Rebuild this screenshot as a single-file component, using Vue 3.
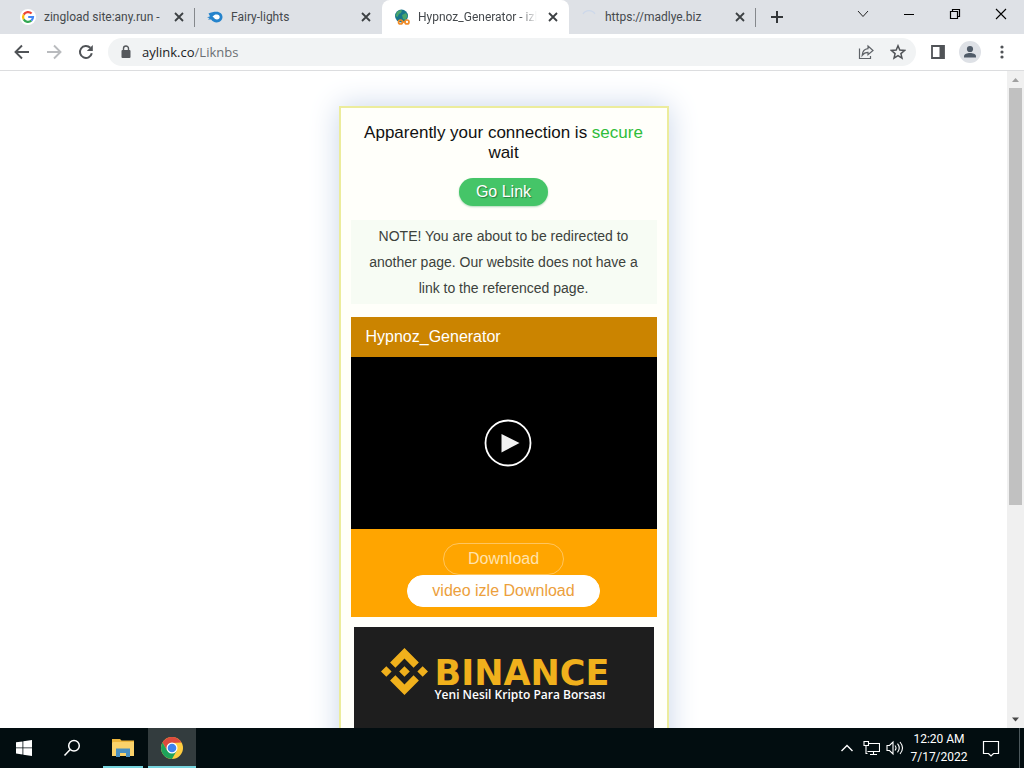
<template>
  <div class="desktop">
    <header class="tab-strip">
      <nav class="tabs" aria-label="Tabs">
        <div v-for="tab in tabs" :key="tab.title" class="tab" :class="{ active: tab.id === activeTab, divided: tab.divided }" @click="activeTab = tab.id">
          <svg v-if="tab.icon === 'google'" class="favicon" viewBox="0 0 16 16">
            <circle cx="8" cy="8" r="8" fill="#fff" />
            <g fill="none" stroke-width="2.2">
              <path d="M11.6 4.6A5 5 0 0 0 3.7 5.6" stroke="#ea4335" />
              <path d="M3.7 5.6a5 5 0 0 0 0 4.8" stroke="#fbbc05" />
              <path d="M3.7 10.4a5 5 0 0 0 7.6 1.3" stroke="#34a853" />
              <path d="M11.3 11.7A5 5 0 0 0 13 8H8.2" stroke="#4285f4" />
            </g>
          </svg>
          <svg v-else-if="tab.icon === 'flame'" class="favicon" viewBox="0 0 16 16">
            <path d="M1.5 4.4C4 3.2 6.500 2.700 9.500 2.700c3.600 0 6 2.300 6 5.300s-2.400 5.400-5.800 5.400c-2.500 0-4.500-1.200-5.500-2.900L1 10.600 2.600 9 0 8.600l3-1.300z" fill="#2583cc" />
            <path d="M5.500 7.800C7 5.800 8.500 5.300 10 5.500c1.600.2 2.700 1.200 2.700 2.500s-1 2.500-2.700 2.500c-1.500 0-2.500-.8-2.900-1.700z" fill="#fff" />
          </svg>
          <svg v-else-if="tab.icon === 'globe'" class="favicon" viewBox="0 0 16 16">
            <circle cx="7.500" cy="7" r="6.500" fill="#17768c" />
            <path d="M3 3c2-2 4-2 5-1.500L7 4 5 5 3.500 8 1.500 7zM8 6l4-2 1.500 3-2 4L9 10z" fill="#49a56c" />
            <g fill="none" stroke="#f28c28" stroke-width="1.700">
              <circle cx="6.500" cy="13" r="2" />
              <circle cx="13" cy="13" r="2" />
              <path d="M8.500 13h2.500" />
            </g>
          </svg>
          <svg v-else class="favicon" viewBox="0 0 16 16">
            <path d="M2 5a7 7 0 0 1 12 0" fill="none" stroke="#cdd8ea" stroke-width="1.300" />
          </svg>
          <span class="tab-title">{{ tab.title }}</span>
          <button class="tab-close" :aria-label="'Close ' + tab.title">
            <svg width="10" height="10" viewBox="0 0 10 10"><path d="M1 1l8 8M9 1L1 9" stroke="#3c4043" stroke-width="1.800" /></svg>
          </button>
        </div>
      </nav>
      <button class="new-tab" aria-label="New tab">
        <svg width="12" height="12" viewBox="0 0 12 12"><path d="M6 0v12M0 6h12" stroke="#333639" stroke-width="2" /></svg>
      </button>
      <div class="window-controls">
        <button aria-label="Search tabs"><svg width="12" height="12" viewBox="0 0 12 12"><path d="M1 3l5 5.500L11 3" fill="none" stroke="#222" /></svg></button>
        <button aria-label="Minimize"><svg width="12" height="12" viewBox="0 0 12 12"><path d="M1 6.500h10" stroke="#000" /></svg></button>
        <button aria-label="Restore"><svg width="12" height="12" viewBox="0 0 12 12"><path d="M1.500 3.500h7v7h-7zM3.500 3.500v-2h7v7h-2" fill="none" stroke="#000" stroke-width="1.200" /></svg></button>
        <button aria-label="Close"><svg width="12" height="12" viewBox="0 0 12 12"><path d="M1 1l10 10M11 1L1 11" stroke="#000" stroke-width="1.100" /></svg></button>
      </div>
    </header>

    <div class="toolbar">
      <button class="tool" aria-label="Back">
        <svg width="16" height="16" viewBox="0 0 16 16"><path d="M15 8H2M8 1.500L1.500 8 8 14.500" fill="none" stroke="#505357" stroke-width="1.900" /></svg>
      </button>
      <button class="tool" aria-label="Forward" disabled>
        <svg width="16" height="16" viewBox="0 0 16 16"><path d="M1 8h13M8 1.500L14.500 8 8 14.500" fill="none" stroke="#b9bbbe" stroke-width="1.900" /></svg>
      </button>
      <button class="tool" aria-label="Reload">
        <svg width="16" height="16" viewBox="0 0 16 16"><path d="M13.800 9.300A6 6 0 1 1 12.300 3.800" fill="none" stroke="#505357" stroke-width="2" /><path d="M14.800 1v6H8.800z" fill="#505357" /></svg>
      </button>
      <div class="omnibox">
        <svg width="16" height="16" viewBox="0 0 16 16"><rect x="3.500" y="6" width="9" height="8" rx="1" fill="#55585c" /><path d="M5.500 6.500V4.500a2.500 2.500 0 0 1 5 0v2" fill="none" stroke="#55585c" stroke-width="1.400" /></svg>
        <a class="address" href="#">aylink.co<span>/Liknbs</span></a>
        <button class="tool" aria-label="Share">
          <svg width="16" height="16" viewBox="0 0 16 16" fill="none" stroke="#5f6368" stroke-width="1.200"><path d="M1.500 4.500v10h11V12" /><path d="M10 2l5 4.500-5 4.300V8.300C7.300 8.300 5.600 9.300 4.200 11.300 4.500 7.500 6.500 5 10 4.700z" /></svg>
        </button>
        <button class="tool" aria-label="Bookmark this tab">
          <svg width="16" height="16" viewBox="0 0 16 16"><path d="M8 1.800l1.800 4.300 4.700.4-3.600 3.100 1.100 4.600L8 11.700l-4 2.500 1.100-4.600-3.600-3.100 4.700-.4z" fill="none" stroke="#505357" stroke-width="1.500" /></svg>
        </button>
      </div>
      <button class="tool" aria-label="Side panel">
        <svg width="16" height="16" viewBox="0 0 16 16"><path d="M2 2h12v12H2z" fill="#fff" stroke="#505357" stroke-width="1.800" /><path d="M9.500 2H14v12H9.500z" fill="#505357" /></svg>
      </button>
      <button class="tool" aria-label="Profile">
        <svg width="22" height="22" viewBox="0 0 22 22"><circle cx="11" cy="11" r="11" fill="#dee1e6" /><circle cx="11" cy="8" r="3.100" fill="#505b68" /><path d="M5 16.500v-1.200c0-2.200 3.300-3.300 6-3.300s6 1.100 6 3.300v1.200z" fill="#505b68" /></svg>
      </button>
      <button class="tool" aria-label="Menu">
        <svg width="16" height="16" viewBox="0 0 16 16" fill="#505357"><circle cx="8" cy="3" r="1.600" /><circle cx="8" cy="8" r="1.600" /><circle cx="8" cy="13" r="1.600" /></svg>
      </button>
    </div>

    <div class="viewport">
      <main class="page">
        <section class="card">
          <h1 class="status">Apparently your connection is <span>secure</span> wait</h1>
          <button class="go-link">Go Link</button>
          <p class="note">NOTE! You are about to be redirected to another page. Our website does not have a link to the referenced page.</p>
          <div class="player">
            <h2 class="player-title">Hypnoz_Generator</h2>
            <div class="screen">
              <button class="play" aria-label="Play">
                <svg width="48" height="48" viewBox="0 0 48 48"><circle cx="24" cy="24" r="22.500" fill="none" stroke="#fff" stroke-width="1.800" /><path d="M17.500 15l18 9-18 9.500z" fill="#f2f2f2" /></svg>
              </button>
            </div>
            <div class="downloads">
              <button class="pill outline">Download</button>
              <button class="pill solid">video izle Download</button>
            </div>
          </div>
          <a class="banner" href="#">
            <svg width="47" height="47" viewBox="0 0 24 24" fill="#f0b01c"><path d="M16.624 13.920l2.718 2.716-7.353 7.353-7.353-7.353 2.717-2.716 4.636 4.660zM21.261 9.284L24 12l-2.715 2.716L18.568 12zM11.989 9.285L14.705 12l-2.716 2.694L9.272 12zM2.716 9.284L5.409 12l-2.692 2.692L0 12zM11.989.012l7.353 7.329-2.718 2.715-4.635-4.636-4.636 4.660-2.717-2.715z" /></svg>
            <span class="banner-text">
              <strong>BINANCE</strong>
              <span>Yeni Nesil Kripto Para Borsası</span>
            </span>
          </a>
        </section>
      </main>
      <div class="scrollbar" aria-hidden="true">
        <svg width="17" height="17" viewBox="0 0 17 17"><path d="M5 11l3.500-4 3.500 4z" fill="#a0a0a0" /></svg>
        <div class="track"><div class="thumb"></div></div>
        <svg width="17" height="17" viewBox="0 0 17 17"><path d="M5 6.500h7l-3.500 4z" fill="#484848" /></svg>
      </div>
    </div>

    <footer class="taskbar">
      <button class="task" aria-label="Start">
        <svg width="16" height="16" viewBox="0 0 16 16" fill="#fff"><path d="M0 2.300l6.500-.9v6.100H0zM7.300 1.300L16 0v7.500H7.300zM0 8.300h6.500v6.200L0 13.600zM7.300 8.300H16V16l-8.700-1.300z" /></svg>
      </button>
      <button class="task" aria-label="Search">
        <svg width="18" height="18" viewBox="0 0 18 18" fill="none" stroke="#fff" stroke-width="1.500"><circle cx="11" cy="6.700" r="5.300" /><path d="M7.200 10.500L1.500 16.500" /></svg>
      </button>
      <div class="running">
        <button class="task open" aria-label="File Explorer">
          <svg width="22" height="20" viewBox="0 0 22 20"><path d="M0 1h8l1.500 1.500H22V18H0z" fill="#eeb63c" /><path d="M1 4h21v14H0V5z" fill="#fbd26a" /><path d="M4 10.500h14V19h-4v-4H8v4H4z" fill="#4a8fc0" /></svg>
        </button>
        <button class="task open current" aria-label="Google Chrome">
          <svg width="22" height="22" viewBox="0 0 22 22">
            <circle cx="11" cy="11" r="11" fill="#ffcd40" />
            <path d="M1.500 5.500A11 11 0 0 1 20.500 5.500L11 6 6.300 13.700z" fill="#dd4b3e" />
            <path d="M1.500 5.500A11 11 0 0 0 11 22l4.700-8.300H6.300z" fill="#1ea35b" />
            <circle cx="11" cy="11" r="5.500" fill="#fff" /><circle cx="11" cy="11" r="4.300" fill="#3e82ee" />
          </svg>
        </button>
      </div>
      <div class="tray">
        <button class="tray-icon" aria-label="Show hidden icons"><svg width="14" height="14" viewBox="0 0 14 14"><path d="M1.500 10L7 4.500l5.500 5.500" fill="none" stroke="#fff" stroke-width="1.400" /></svg></button>
        <button class="tray-icon" aria-label="Network"><svg width="17" height="16" viewBox="0 0 17 16" fill="none" stroke="#fff" stroke-width="1.100"><path d="M5.500 3.500h11v8h-12M10.500 11.500v3M7 14.500h7M1 1.500h4.500v4H1zM3 5.500v8h1.500" /></svg></button>
        <button class="tray-icon" aria-label="Volume"><svg width="18" height="16" viewBox="0 0 18 16" fill="none" stroke="#fff" stroke-width="1.100"><path d="M1 5.500h2.500L7 2v12l-3.500-3.500H1zM9 5.500q2 2.500 0 5M11.500 3.700q3.500 4.300 0 8.600M14 2q5 6 0 12" /></svg></button>
        <time class="clock" datetime="2022-07-17T00:20">
          <span>12:20 AM</span>
          <span>7/17/2022</span>
        </time>
        <button class="notifications" aria-label="Notifications"><svg width="18" height="18" viewBox="0 0 18 18"><path d="M1.500 2.500h15v12h-5L9 17l-2.500-2.500h-5z" fill="none" stroke="#fff" stroke-width="1.200" /></svg></button>
      </div>
    </footer>
  </div>
</template>

<script setup>
import { ref } from 'vue';

const activeTab = ref(3);

const tabs = [
  { id: 1, title: 'zingload site:any.run -', icon: 'google', divided: true },
  { id: 2, title: 'Fairy-lights', icon: 'flame', divided: false },
  { id: 3, title: 'Hypnoz_Generator - izl', icon: 'globe', divided: false },
  { id: 4, title: 'https://madlye.biz', icon: 'loading', divided: true }
];
</script>

<style>
body {
  margin: 0;
}
</style>

<style scoped>
.desktop {
  display: flex;
  flex-direction: column;
  height: 100vh;
  overflow: hidden;
  background: #fff;
  font-family: "Open Sans", "Noto Sans", sans-serif;
}

button {
  display: flex;
  align-items: center;
  justify-content: center;
  padding: 0;
  border: none;
  background: none;
  font: inherit;
  cursor: pointer;
}

svg {
  flex: none;
}

/* Onglets */
.tab-strip {
  display: flex;
  height: 34px;
  flex: none;
  padding-left: 8px;
  background: #dee1e6;
}

.tabs {
  display: flex;
}

.tab {
  display: flex;
  align-items: center;
  gap: 8px;
  box-sizing: border-box;
  width: 187px;
  padding: 0 8px 0 12px;
  position: relative;
  font-family: Roboto, "Open Sans", sans-serif;
  font-size: 12px;
  color: #45494d;
}

.tab.divided::after {
  content: '';
  position: absolute;
  right: 0;
  top: 8px;
  width: 1px;
  height: 19px;
  background: #85888c;
}

.tab.active {
  background: #fff;
  border-radius: 8px 8px 0 0;
}

.favicon {
  width: 16px;
  height: 16px;
}

.tab-title {
  flex: 1;
  min-width: 0;
  overflow: hidden;
  white-space: nowrap;
}

.tab.active .tab-title {
  mask-image: linear-gradient(to right, #000 85%, transparent);
}

.tab-close {
  width: 16px;
  height: 16px;
}

.new-tab {
  width: 42px;
}

.window-controls {
  display: flex;
  margin-left: auto;
}

.window-controls button {
  width: 46px;
  height: 28px;
}

/* Barre d'outils */
.toolbar {
  display: flex;
  align-items: center;
  flex: none;
  height: 36px;
  padding: 0 6px;
  border-bottom: 1px solid #dcdddf;
}

.tool {
  width: 32px;
  height: 28px;
}

.omnibox {
  display: flex;
  align-items: center;
  flex: 1;
  height: 28px;
  margin: 0 6px;
  padding: 0 2px 0 10px;
  border-radius: 14px;
  background: #f1f3f4;
}

.address {
  flex: 1;
  margin-left: 8px;
  font-size: 13px;
  color: #202124;
  text-decoration: none;
}

.address span {
  color: #6b6f73;
}

/* Page */
.viewport {
  display: flex;
  flex: 1;
  min-height: 0;
}

.page {
  flex: 1;
  padding-top: 35px;
  overflow: hidden;
  font-family: "Liberation Sans", Arial, sans-serif;
}

.card {
  display: flex;
  flex-direction: column;
  align-items: center;
  box-sizing: border-box;
  width: 330px;
  margin: 0 auto;
  padding: 15px 10px;
  border: 2px solid #ecec9c;
  background: #fffffa;
  box-shadow: 0 0 28px #c9d6ea;
}

.status {
  margin: 0;
  font-size: 17px;
  font-weight: 400;
  line-height: 20px;
  text-align: center;
  color: #111;
}

.status span {
  color: #2fbd3a;
}

.go-link {
  height: 28px;
  margin: 15px 0 14px;
  padding: 0 17px;
  border-radius: 14px;
  background: #45c568;
  box-shadow: 0 1px 2px #b4dabd;
  color: #fff;
  font-size: 16px;
  text-shadow: 1px 1px 1px #2a7b40;
}

.note {
  margin: 0 0 13px;
  padding: 3px 10px;
  background: #f7fcf4;
  color: #3c423c;
  font-size: 14px;
  line-height: 26px;
  text-align: center;
}

.player {
  align-self: stretch;
  background: #ffa500;
}

.player-title {
  margin: 0;
  padding: 0 15px;
  background: #cb8400;
  color: #fff;
  font-size: 16px;
  font-weight: 400;
  line-height: 40px;
}

.screen {
  display: flex;
  align-items: center;
  justify-content: center;
  height: 172px;
  background: #000;
}

.play {
  margin-left: 8px;
}

.downloads {
  display: flex;
  flex-direction: column;
  align-items: center;
  padding: 14px 0 10px;
}

.pill {
  box-sizing: border-box;
  height: 32px;
  padding: 0 24px;
  border: 1px solid #fff;
  border-radius: 16px;
  font-size: 16px;
}

.pill.outline {
  border-color: #ffc55e;
  color: #ffe3ae;
}

.pill.solid {
  background: #fff;
  color: #eca03c;
}

.banner {
  display: flex;
  align-items: flex-start;
  gap: 7px;
  box-sizing: border-box;
  width: 300px;
  height: 250px;
  margin-top: 10px;
  padding: 21px 0 0 27px;
  background: #1e1e1e;
  text-decoration: none;
}

.banner-text {
  display: flex;
  flex-direction: column;
  padding-top: 10px;
  font-family: "Open Sans", sans-serif;
  font-size: 12px;
  font-weight: 600;
  line-height: 14px;
  white-space: nowrap;
  color: #fff;
}

.banner-text strong {
  font-family: "DejaVu Sans", sans-serif;
  font-size: 35px;
  font-weight: 700;
  line-height: 30px;
  color: #f0b01c;
}

.scrollbar {
  display: flex;
  flex-direction: column;
  width: 17px;
  background: #f0f0f0;
}

.track {
  flex: 1;
  padding: 0 2px;
}

.thumb {
  height: 67%;
  background: #c1c1c1;
}

/* Barre des taches */
.taskbar {
  display: flex;
  flex: none;
  height: 40px;
  background: #020d10;
  color: #fff;
}

.task {
  width: 48px;
  height: 40px;
}

.running {
  display: flex;
  gap: 1px;
  margin-left: 3px;
}

.task.open {
  position: relative;
}

.task.open::after {
  content: '';
  position: absolute;
  left: 4px;
  right: 4px;
  bottom: 0;
  height: 2px;
  background: #76d4de;
}

.task.current {
  background: #333c3e;
}

.task.current::after {
  left: 0;
  right: 0;
}

.tray {
  display: flex;
  align-items: center;
  margin-left: auto;
  margin-right: 4px;
  border-right: 1px solid #4c585c;
}

.tray-icon {
  width: 24px;
  height: 40px;
}

.clock {
  display: flex;
  flex-direction: column;
  width: 64px;
  font-family: Roboto, "Open Sans", sans-serif;
  font-size: 12px;
  line-height: 18px;
  text-align: center;
  white-space: nowrap;
}

.notifications {
  width: 40px;
  height: 40px;
  margin: 0 8px 0 0;
}
</style>
